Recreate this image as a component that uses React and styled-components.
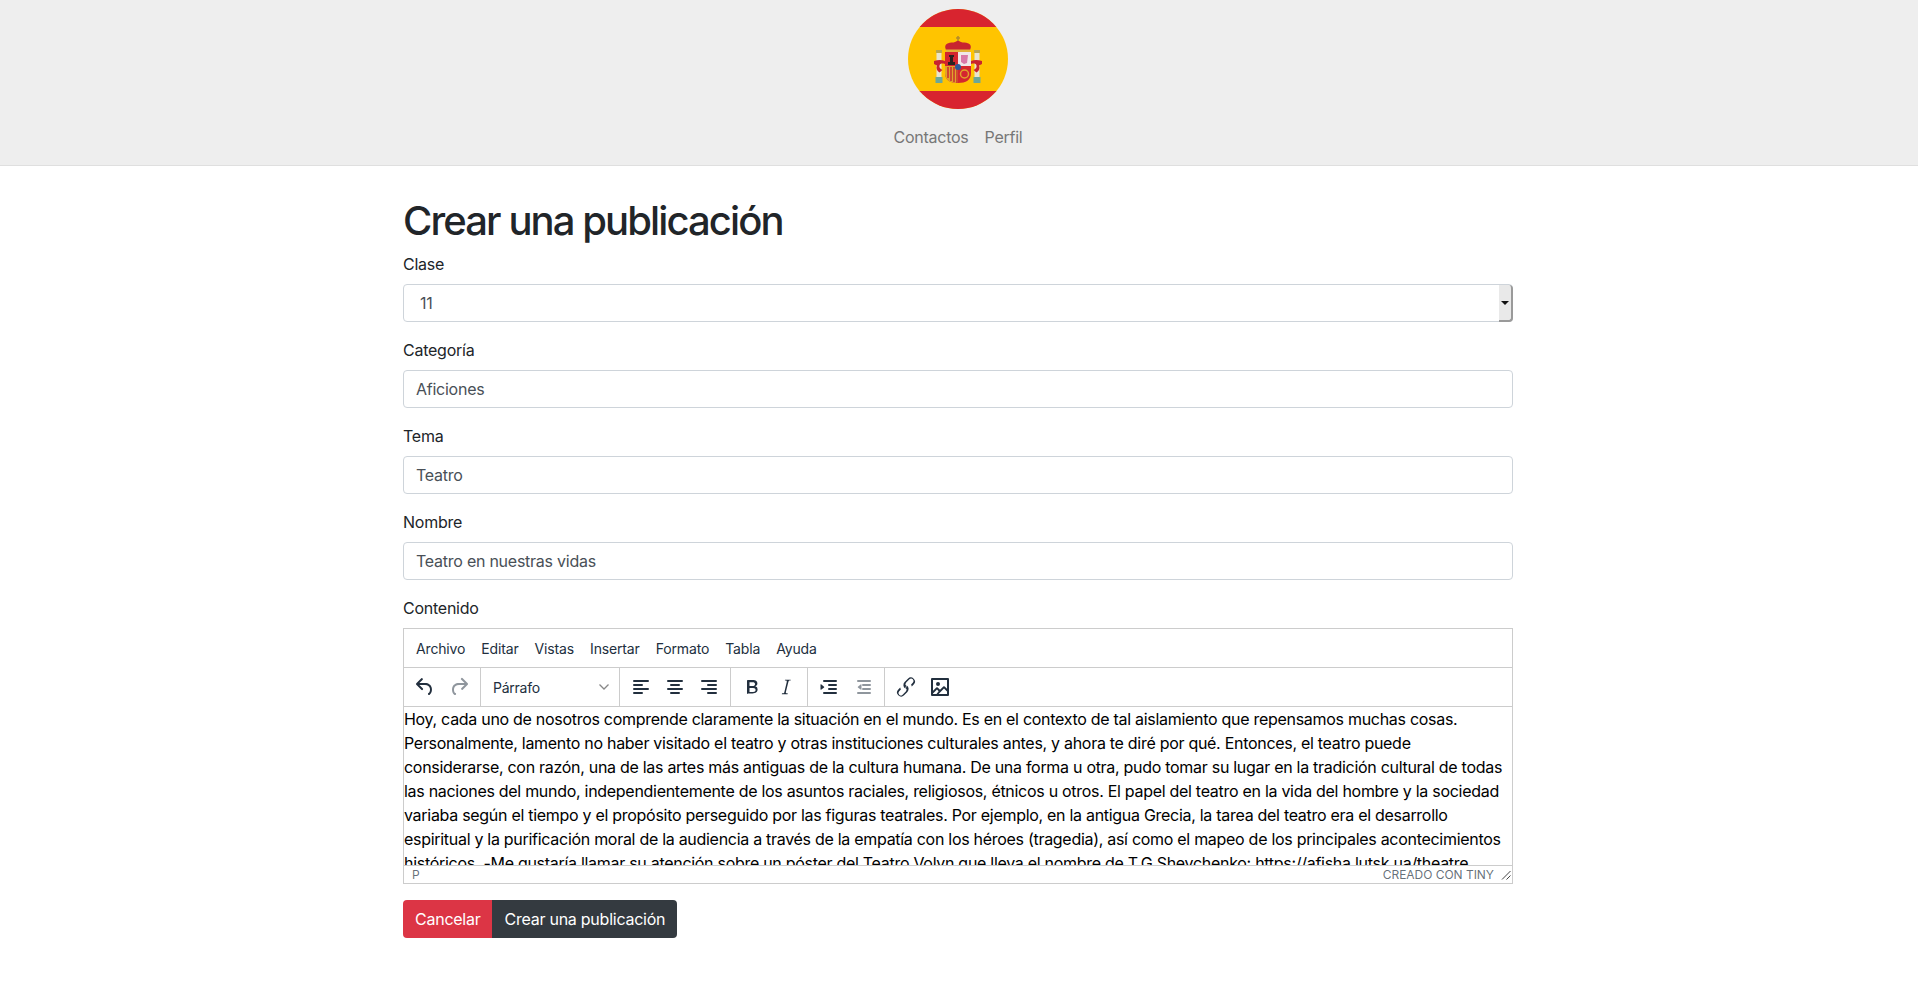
import React from "react";
import styled, { createGlobalStyle } from "styled-components";

const GlobalStyle = createGlobalStyle`
  * { box-sizing: border-box; }
  body {
    margin: 0;
    background: #fff;
    color: #212529;
    font-family: Inter, "Liberation Sans", sans-serif;
    font-size: 16px;
    line-height: 1.5;
    letter-spacing: -0.25px;
  }
`;

const Header = styled.header`
  height: 166px;
  background: #eee;
  border-bottom: 1px solid #dfdfdf;
  display: flex;
  flex-direction: column;
  align-items: center;
  padding-top: 9px;
  padding-right: 2px;
`;

const Nav = styled.nav`
  display: flex;
  gap: 16px;
  margin-top: 16px;
  color: #777;
  font-size: 16px;
  letter-spacing: -0.25px;
`;

const Container = styled.main`
  width: 1110px;
  margin: 0 auto;
  padding-top: 31px;
  position: relative;
  left: -1px;
`;

const Title = styled.h1`
  margin: 0 0 7px;
  font-size: 40px;
  line-height: 48px;
  font-weight: 500;
  letter-spacing: -1.9px;
`;

const Group = styled.div`
  margin-bottom: 16px;
`;

const Label = styled.label`
  display: block;
  margin-bottom: 8px;
  line-height: 24px;
`;

const Field = styled.div`
  height: 38px;
  border: 1px solid #ced4da;
  border-radius: 4px;
  padding: 6px 12px;
  color: #495057;
  line-height: 24px;
  background: #fff;
  position: relative;
`;

const SelectField = styled(Field)`
  padding-left: 16px;
`;

const Spinner = styled.span`
  position: absolute;
  top: 0;
  right: -1px;
  bottom: -1px;
  width: 14px;
  background: #e9e9e9;
  border-right: 2px solid #9a9a9a;
  border-bottom: 2px solid #9a9a9a;
  border-radius: 0 4px 4px 0;
  display: flex;
  align-items: center;
  justify-content: center;

  &::after {
    content: "";
    border-left: 4px solid transparent;
    border-right: 4px solid transparent;
    border-top: 4px solid #111;
  }
`;

const Editor = styled.div`
  height: 256px;
  border: 1px solid #ccc;
  display: flex;
  flex-direction: column;
  color: #222f3e;
  overflow: hidden;
`;

const MenuBar = styled.div`
  height: 39px;
  flex: none;
  display: flex;
  align-items: center;
  gap: 16px;
  padding: 0 12px;
  font-size: 14px;
  letter-spacing: -0.15px;
  border-bottom: 1px solid #ccc;
`;

const ToolBar = styled.div`
  height: 39px;
  flex: none;
  display: flex;
  align-items: stretch;
  border-bottom: 1px solid #ccc;
`;

const ToolGroup = styled.div`
  display: flex;
  align-items: center;
  gap: 10px;
  padding: 0 9px 0 9px;
  border-right: ${(p) => (p.$last ? "none" : "1px solid #ccc")};
`;

const ToolIcon = styled.svg`
  width: 24px;
  height: 24px;
  flex: none;
  fill: currentColor;
  opacity: ${(p) => (p.$off ? 0.5 : 1)};
`;

const FormatSelect = styled.div`
  width: 120px;
  padding: 0 1px 0 3px;
  display: flex;
  align-items: center;
  justify-content: space-between;
  font-size: 14px;
`;

const Body = styled.div`
  flex: 1;
  min-height: 0;
  overflow: hidden;
  color: #000;
  font-size: 16px;
  line-height: 24px;
  letter-spacing: -0.29px;
  white-space: nowrap;
`;

const StatusBar = styled.div`
  height: 18px;
  flex: none;
  display: flex;
  align-items: center;
  justify-content: space-between;
  padding: 0 1px 0 8px;
  font-size: 12px;
  color: rgba(34, 47, 62, 0.7);
  border-top: 1px solid #ccc;
  letter-spacing: -0.03px;
`;

const Brand = styled.span`
  margin-left: auto;
  margin-right: 7px;
`;

const Actions = styled.div`
  display: flex;
`;

const Button = styled.button`
  height: 38px;
  padding: 0 12px;
  border: none;
  color: #fff;
  font: inherit;
  letter-spacing: inherit;
  background: ${(p) => (p.$danger ? "#dc3545" : "#343a40")};
  border-radius: ${(p) => (p.$danger ? "4px 0 0 4px" : "0 4px 4px 0")};
`;

const menuItems = ["Archivo", "Editar", "Vistas", "Insertar", "Formato", "Tabla", "Ayuda"];

const bodyLines = [
  "Hoy, cada uno de nosotros comprende claramente la situación en el mundo. Es en el contexto de tal aislamiento que repensamos muchas cosas.",
  "Personalmente, lamento no haber visitado el teatro y otras instituciones culturales antes, y ahora te diré por qué. Entonces, el teatro puede",
  "considerarse, con razón, una de las artes más antiguas de la cultura humana. De una forma u otra, pudo tomar su lugar en la tradición cultural de todas",
  "las naciones del mundo, independientemente de los asuntos raciales, religiosos, étnicos u otros. El papel del teatro en la vida del hombre y la sociedad",
  "variaba según el tiempo y el propósito perseguido por las figuras teatrales. Por ejemplo, en la antigua Grecia, la tarea del teatro era el desarrollo",
  "espiritual y la purificación moral de la audiencia a través de la empatía con los héroes (tragedia), así como el mapeo de los principales acontecimientos",
  "históricos. -Me gustaría llamar su atención sobre un póster del Teatro Volyn que lleva el nombre de T.G Shevchenko: https://afisha.lutsk.ua/theatre",
];

const Icon = ({ d, off, ...rest }) => (
  <ToolIcon viewBox="0 0 24 24" $off={off} {...rest}>
    <path d={d} fillRule="evenodd" />
  </ToolIcon>
);

const paths = {
  undo: "M6.4 8H12c3.7 0 6.2 2 6.8 5.1.6 2.7-.4 5.6-2.3 6.8a1 1 0 0 1-1-1.8c1.1-.6 1.8-2.7 1.4-4.6-.5-2.1-2.1-3.5-4.9-3.5H6.4l3.3 3.3a1 1 0 1 1-1.4 1.4l-5-5a1 1 0 0 1 0-1.4l5-5a1 1 0 0 1 1.4 1.4L6.4 8Z",
  redo: "M17.6 10H12c-2.8 0-4.4 1.4-4.9 3.5-.4 2 .3 4 1.4 4.6a1 1 0 1 1-1 1.8c-2-1.2-2.9-4.1-2.3-6.8C5.8 10 8.3 8 12 8h5.6l-3.3-3.3a1 1 0 1 1 1.4-1.4l5 5a1 1 0 0 1 0 1.4l-5 5a1 1 0 0 1-1.4-1.4l3.3-3.3Z",
  left: "M5 5h14a1 1 0 0 1 0 2H5a1 1 0 1 1 0-2Zm0 4h8a1 1 0 0 1 0 2H5a1 1 0 0 1 0-2Zm0 8h8a1 1 0 0 1 0 2H5a1 1 0 0 1 0-2Zm0-4h14a1 1 0 0 1 0 2H5a1 1 0 0 1 0-2Z",
  center: "M5 5h14a1 1 0 0 1 0 2H5a1 1 0 1 1 0-2Zm3 4h8a1 1 0 0 1 0 2H8a1 1 0 1 1 0-2Zm0 8h8a1 1 0 0 1 0 2H8a1 1 0 0 1 0-2Zm-3-4h14a1 1 0 0 1 0 2H5a1 1 0 0 1 0-2Z",
  right: "M5 5h14a1 1 0 0 1 0 2H5a1 1 0 1 1 0-2Zm6 4h8a1 1 0 0 1 0 2h-8a1 1 0 0 1 0-2Zm0 8h8a1 1 0 0 1 0 2h-8a1 1 0 0 1 0-2Zm-6-4h14a1 1 0 0 1 0 2H5a1 1 0 0 1 0-2Z",
  bold: "M7.8 19c-.3 0-.5 0-.6-.2l-.2-.5V5.7c0-.2 0-.4.2-.5l.6-.2h5c1.5 0 2.7.3 3.5 1 .7.6 1.1 1.4 1.1 2.5a3 3 0 0 1-.6 1.7 3 3 0 0 1-1.5 1 3.2 3.2 0 0 1 2.3 3.1c0 1.3-.4 2.3-1.3 3-.8.7-2.1 1.1-3.8 1.1H7.8Zm1.7-8h3.1c1.6 0 2.4-.6 2.4-1.8 0-1.3-.8-1.9-2.4-1.9H9.5V11Zm0 6h3.6c1.7 0 2.5-.7 2.5-2 0-1.4-.8-2.1-2.5-2.1H9.5V17Z",
  italic: "M16.7 4.7l-.1.9h-.8c-.5 0-.9.1-1 .3-.2.2-.4.7-.5 1.4L12 16.6c-.2.7-.2 1.2-.1 1.4.1.2.5.3 1 .3h.8l-.1.9H7.8l.2-.9h.8c.6 0 1-.1 1.2-.3.2-.2.3-.7.5-1.4l2.2-9.3c.1-.7.1-1.2 0-1.4-.1-.2-.5-.3-1-.3h-.8l.1-.9h5.7Z",
  indent: "M7 5h12a1 1 0 0 1 0 2H7a1 1 0 1 1 0-2Zm5 4h7a1 1 0 0 1 0 2h-7a1 1 0 0 1 0-2Zm0 4h7a1 1 0 0 1 0 2h-7a1 1 0 0 1 0-2Zm-5 4h12a1 1 0 0 1 0 2H7a1 1 0 0 1 0-2Zm-2.600-2.400a.5.5 0 0 1-.9-.4V9.800a.5.5 0 0 1 .9-.4l2.700 2.300a.5.5 0 0 1 0 .7l-2.700 2.200Z",
  outdent: "M7 5h12a1 1 0 0 1 0 2H7a1 1 0 1 1 0-2Zm5 4h7a1 1 0 0 1 0 2h-7a1 1 0 0 1 0-2Zm0 4h7a1 1 0 0 1 0 2h-7a1 1 0 0 1 0-2Zm-5 4h12a1 1 0 0 1 0 2H7a1 1 0 0 1 0-2Zm2.600-2.400-2.700-2.200a.5.5 0 0 1 0-.7l2.700-2.300a.5.5 0 0 1 .9.4v4.400a.5.5 0 0 1-.9.4Z",
  link: "M6.200 12.450 4.300 14.400a4.100 4.100 0 0 0 5.800 5.800l3.300-3.300a4.100 4.100 0 0 0-.6-6.300l-1.100 1.100c-.3.3-.4.6-.4.9l.5.4a2.400 2.400 0 0 1 0 3.400l-3.200 3.300a2.400 2.400 0 0 1-3.400-3.400l1.700-1.700c-.3-.7-.5-1.400-.7-2.150Zm11.600-.9 1.900-1.950a4.100 4.100 0 0 0-5.800-5.800L10.600 7.100a4.100 4.100 0 0 0 .6 6.300l1.100-1.100c.3-.3.4-.6.4-.9l-.5-.4a2.400 2.400 0 0 1 0-3.400l3.200-3.300a2.400 2.400 0 0 1 3.400 3.400l-1.700 1.700c.3.7.5 1.400.7 2.150Z",
  image: "M5 15.700l3.300-3.200a1 1 0 0 1 1.400 0L12 14.800l3.300-3.300a1 1 0 0 1 1.400 0l2.300 2.200V5H5v10.700ZM5 18.500V19h3.500l2.100-2.800-1.600-1.600L5 18.500Zm14-2-3-2.900-5.400 5.400H19v-2.500ZM4 3h16a1 1 0 0 1 1 1v16a1 1 0 0 1-1 1H4a1 1 0 0 1-1-1V4a1 1 0 0 1 1-1Zm6 8a2 2 0 1 1 0-4 2 2 0 0 1 0 4Z",
};

const Pillar = ({ x }) => (
  <g>
    <rect x={x} y="43" width="5" height="25" fill="#e8e4cf" />
    <rect x={x - 0.5} y="41" width="6" height="3" fill="#b9a650" />
    <rect x={x - 1} y="68" width="7" height="6" fill="#6ba79a" />
  </g>
);

const SpainFlag = () => (
  <svg width="100" height="100" viewBox="0 0 100 100">
    <defs>
      <clipPath id="disc">
        <circle cx="50" cy="50" r="50" />
      </clipPath>
    </defs>
    <g clipPath="url(#disc)">
      <rect width="100" height="100" fill="#ffc400" />
      <rect width="100" height="18" fill="#d8242f" />
      <rect y="82" width="100" height="18" fill="#d8242f" />
    </g>
    <Pillar x={28.5} />
    <Pillar x={66.5} />
    {/* ribbons */}
    <path d="M26 52c4-1.500 8-1.500 11 0v3c-3-1-5-.5-5.500 1.500-.5 2 .5 3 3 4.500l-3 2.500c-3-2-3.500-4.500-2.500-7l-3-1.500Z" fill="#c8242f" />
    <path d="M74 52c-4-1.500-8-1.500-11 0v3c3-1 5-.5 5.500 1.500.5 2-.5 3-3 4.500l3 2.500c3-2 3.500-4.500 2.500-7l3-1.500Z" fill="#c8242f" />
    {/* crown */}
    <path d="M38 41c-1.500-3-1-5.500 1.500-6.500 3-1.500 5.500-.5 7.500-1.500l3-1.500 3 1.500c2 1 4.500 0 7.500 1.500 2.500 1 3 3.500 1.500 6.500Z" fill="#c8242f" />
    <path d="M38 40.500h24V43H38Z" fill="#e2b23a" />
    <path d="M49.200 27h1.600v5h-1.600ZM48 28.300h4v1.400h-4Z" fill="#b58c2a" />
    {/* shield */}
    <path d="M37 43h13v31c-8 0-13-3-13-10Z" fill="#d4262f" />
    <path d="M50 43h13v14H50Z" fill="#f0e6e8" />
    <path d="M37 57h13v17c-8 0-13-3-13-10Z" fill="#e0a42c" />
    <path d="M40 58v11M43 58v14M46 58v15M49 58v16" stroke="#c8242f" strokeWidth="1.400" />
    <path d="M50 57h13v7c0 7-5 10-13 10Z" fill="#d4262f" />
    <circle cx="56.500" cy="65" r="4" fill="none" stroke="#e0a42c" strokeWidth="1.500" />
    <path d="M53 46h7l-1 8-3 1-3-2Z" fill="#d978a8" />
    <path d="M41 46h5v2h-1v5h2v3h-7v-3h2v-5h-1Z" fill="#2c2322" />
    <circle cx="50" cy="58" r="3" fill="#2d5a9a" />
  </svg>
);

export default function App() {
  return (
    <>
      <GlobalStyle />
      <Header>
        <SpainFlag />
        <Nav>
          <span>Contactos</span>
          <span>Perfil</span>
        </Nav>
      </Header>
      <Container>
        <Title>Crear una publicación</Title>
        <Group>
          <Label>Clase</Label>
          <SelectField>
            11
            <Spinner />
          </SelectField>
        </Group>
        <Group>
          <Label>Categoría</Label>
          <Field>Aficiones</Field>
        </Group>
        <Group>
          <Label>Tema</Label>
          <Field>Teatro</Field>
        </Group>
        <Group>
          <Label>Nombre</Label>
          <Field>Teatro en nuestras vidas</Field>
        </Group>
        <Group>
          <Label>Contenido</Label>
          <Editor>
            <MenuBar>
              {menuItems.map((item) => (
                <span key={item}>{item}</span>
              ))}
            </MenuBar>
            <ToolBar>
              <ToolGroup>
                <Icon d={paths.undo} />
                <Icon d={paths.redo} off />
              </ToolGroup>
              <ToolGroup>
                <FormatSelect>
                  Párrafo
                  <svg width="10" height="6" viewBox="0 0 10 6" fill="none" stroke="#888" strokeWidth="1.300">
                    <path d="M0.500 0.500 5 5l4.500-4.500" />
                  </svg>
                </FormatSelect>
              </ToolGroup>
              <ToolGroup>
                <Icon d={paths.left} />
                <Icon d={paths.center} />
                <Icon d={paths.right} />
              </ToolGroup>
              <ToolGroup>
                <Icon d={paths.bold} />
                <Icon d={paths.italic} />
              </ToolGroup>
              <ToolGroup>
                <Icon d={paths.indent} />
                <Icon d={paths.outdent} off />
              </ToolGroup>
              <ToolGroup $last>
                <Icon d={paths.link} />
                <Icon d={paths.image} />
              </ToolGroup>
            </ToolBar>
            <Body>
              {bodyLines.map((line) => (
                <div key={line}>{line}</div>
              ))}
            </Body>
            <StatusBar>
              <span>P</span>
              <Brand>CREADO CON TINY</Brand>
              <svg width="10" height="10" viewBox="0 0 10 10" stroke="#444" strokeWidth="1">
                <path d="M1 9.500 9.500 1M5.500 9.500l4-4" />
              </svg>
            </StatusBar>
          </Editor>
        </Group>
        <Actions>
          <Button $danger>Cancelar</Button>
          <Button>Crear una publicación</Button>
        </Actions>
      </Container>
    </>
  );
}
